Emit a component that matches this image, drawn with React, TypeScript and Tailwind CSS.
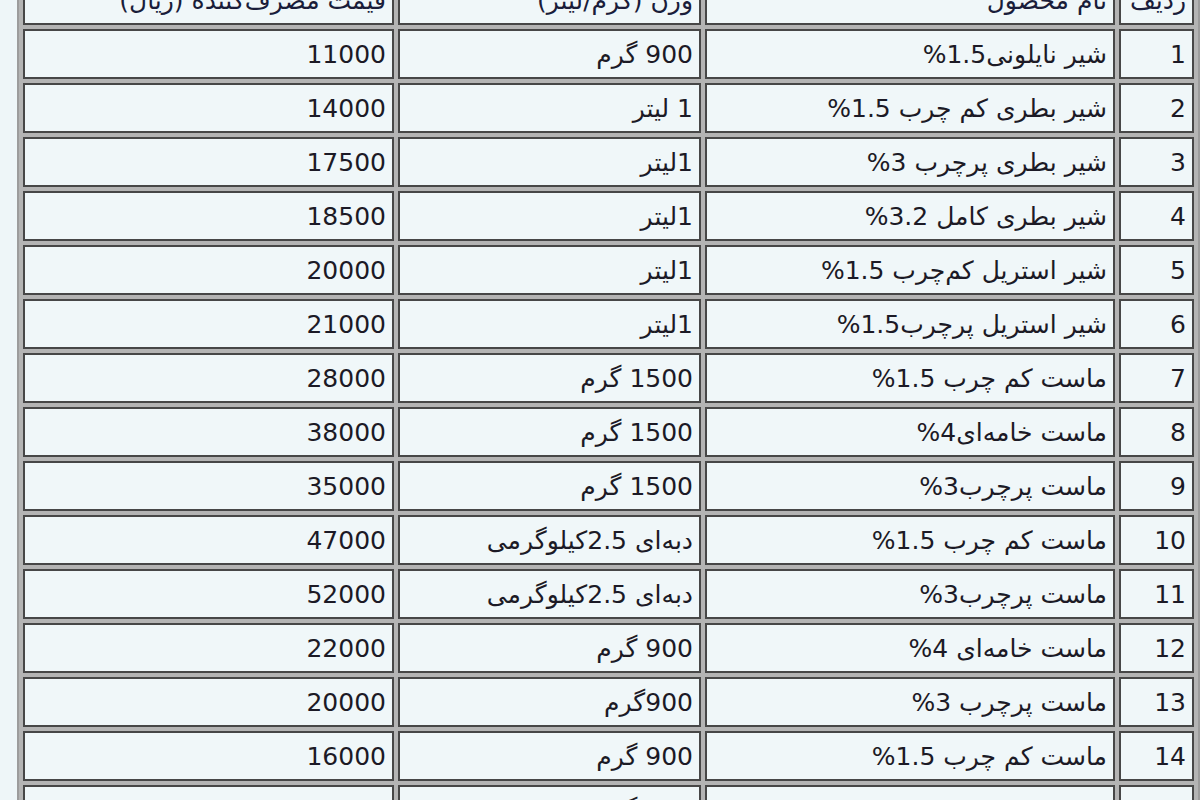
import React from 'react'

const rows = [
  { n: '1', name: 'شیر نایلونی1.5%', weight: '900 گرم', price: '11000' },
  { n: '2', name: 'شیر بطری کم چرب 1.5%', weight: '1 لیتر', price: '14000' },
  { n: '3', name: 'شیر بطری پرچرب 3%', weight: '1لیتر', price: '17500' },
  { n: '4', name: 'شیر بطری کامل 3.2%', weight: '1لیتر', price: '18500' },
  { n: '5', name: 'شیر استریل کم‌چرب 1.5%', weight: '1لیتر', price: '20000' },
  { n: '6', name: 'شیر استریل پرچرب1.5%', weight: '1لیتر', price: '21000' },
  { n: '7', name: 'ماست کم چرب 1.5%', weight: '1500 گرم', price: '28000' },
  { n: '8', name: 'ماست خامه‌ای4%', weight: '1500 گرم', price: '38000' },
  { n: '9', name: 'ماست پرچرب3%', weight: '1500 گرم', price: '35000' },
  { n: '10', name: 'ماست کم چرب 1.5%', weight: 'دبه‌ای 2.5کیلوگرمی', price: '47000' },
  { n: '11', name: 'ماست پرچرب3%', weight: 'دبه‌ای 2.5کیلوگرمی', price: '52000' },
  { n: '12', name: 'ماست خامه‌ای 4%', weight: '900 گرم', price: '22000' },
  { n: '13', name: 'ماست پرچرب 3%', weight: '900گرم', price: '20000' },
  { n: '14', name: 'ماست کم چرب 1.5%', weight: '900 گرم', price: '16000' },
  { n: '15', name: 'ماست کم چرب 1.5%', weight: '450 گرم', price: '33000' },
]

const cell =
  'h-[50px] border-2 border-[#474747] bg-[#f0f7f9] px-[6px] text-right align-middle whitespace-nowrap'

export default function App() {
  return (
    <div className="h-[800px] w-[1200px] overflow-hidden bg-[#eef6f8] font-['DejaVu_Sans',sans-serif] text-[25px] leading-none text-[#1c1a26]">
      <div className="mt-[-31px] ml-[20px] w-[1180px]" dir="rtl">
        <table className="border-separate border-spacing-[4px] border-2 border-[#9c9c9c] bg-[#b4b4b4] table-fixed w-[1180px]">
          <colgroup>
            <col className="w-[75px]" />
            <col className="w-[410px]" />
            <col className="w-[303px]" />
            <col className="w-[371px]" />
          </colgroup>
          <thead>
            <tr>
              <th className={cell + ' font-normal text-[#1a1d3a]'}>ردیف</th>
              <th className={cell + ' font-normal text-[#1a1d3a]'}>نام محصول</th>
              <th className={cell + ' font-normal text-[#1a1d3a]'}>وزن (گرم/لیتر)</th>
              <th className={cell + ' font-normal text-[#1a1d3a]'}>قیمت مصرف‌کننده (ریال)</th>
            </tr>
          </thead>
          <tbody>
            {rows.map((r) => (
              <tr key={r.n}>
                <td className={cell}>{r.n}</td>
                <td className={cell}>{r.name}</td>
                <td className={cell}>{r.weight}</td>
                <td className={cell}>{r.price}</td>
              </tr>
            ))}
          </tbody>
        </table>
      </div>
    </div>
  )
}
